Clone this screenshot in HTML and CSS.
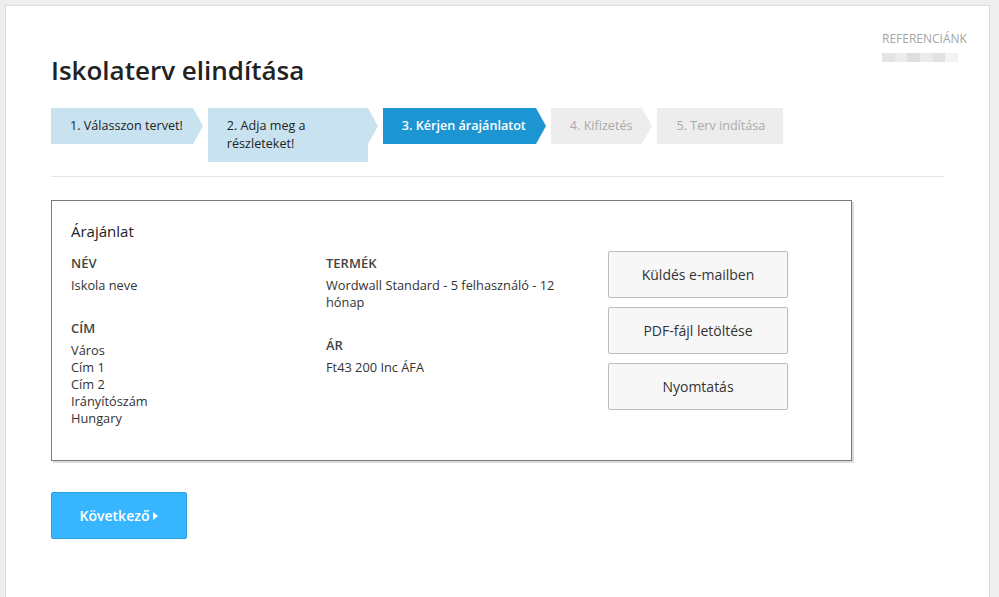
FILE: index.html
```html
<html>
	<head>
		<title>Iskolaterv elindítása</title>
		<link rel="stylesheet" href="styles.css">
	</head>
	<body>
		<div class="page">
			<div class="reference">
				<div class="reference_title">Referenciánk</div>
				<div class="reference_blur">
					<span></span><span></span><span></span><span></span><span></span><span></span>
				</div>
			</div>

			<h1 class="title">Iskolaterv elindítása</h1>

			<div class="steps">
				<div class="step step_done">1. Válasszon tervet!</div>
				<div class="step step_done step_wide">2. Adja meg a részleteket!</div>
				<div class="step step_active">3. Kérjen árajánlatot</div>
				<div class="step step_todo">4. Kifizetés</div>
				<div class="step step_todo step_last">5. Terv indítása</div>
			</div>

			<div class="divider"></div>

			<div class="quote">
				<div class="quote_main">
					<div class="quote_title">Árajánlat</div>
					<div class="quote_cols">
						<div class="quote_col quote_col_first">
							<div class="field">
								<div class="field_label">NÉV</div>
								<div class="field_value">Iskola neve</div>
							</div>
							<div class="field">
								<div class="field_label">CÍM</div>
								<div class="field_value">
									Város<br />
									Cím 1<br />
									Cím 2<br />
									Irányítószám<br />
									Hungary
								</div>
							</div>
						</div>
						<div class="quote_col">
							<div class="field">
								<div class="field_label">TERMÉK</div>
								<div class="field_value">Wordwall Standard - 5 felhasználó - 12 hónap</div>
							</div>
							<div class="field">
								<div class="field_label">ÁR</div>
								<div class="field_value">Ft43 200 Inc ÁFA</div>
							</div>
						</div>
					</div>
				</div>
				<div class="quote_actions">
					<button class="action">Küldés e-mailben</button>
					<button class="action">PDF-fájl letöltése</button>
					<button class="action">Nyomtatás</button>
				</div>
			</div>

			<button class="next">Következő<span class="next_caret"></span></button>
		</div>
	</body>
</html>
```

FILE: styles.css
```css
body	{
	margin: 0;
	padding: 5px 9px 0 5px;
	background: #eeeeee;
	font-family: "Open Sans", "Liberation Sans", sans-serif;
	color: #333;
	height: 597px;
	box-sizing: border-box;
	overflow: hidden;
}
.page	{
	position: relative;
	background: white;
	border: 1px solid #dcdcdc;
	border-bottom: none;
	height: 100%;
	box-sizing: border-box;
	padding: 46px 45px 0 45px;
}
.reference	{
	position: absolute;
	top: 25px;
	right: 17px;
	width: 90px;
}
.reference_title	{
	font-size: 12px;
	line-height: 16px;
	text-transform: uppercase;
	color: #a5a5a5;
}
.reference_blur	{
	display: flex;
	margin-top: 6px;
	width: 76px;
	height: 9px;
}
.reference_blur span	{
	flex: 1;
	background: #e4e4e4;
}
.reference_blur span:nth-child(2)	{
	background: #ececec;
}
.reference_blur span:nth-child(3)	{
	background: #dedede;
}
.reference_blur span:nth-child(4)	{
	background: #ebebeb;
}
.reference_blur span:nth-child(5)	{
	background: #e2e2e2;
}
.reference_blur span:nth-child(6)	{
	background: #f3f3f3;
}
.title	{
	margin: 0;
	font-size: 26px;
	line-height: 36px;
	font-weight: 600;
	color: #222;
}
.steps	{
	display: flex;
	align-items: flex-start;
	margin-top: 20px;
}
.step	{
	position: relative;
	font-size: 12.6px;
	line-height: 18px;
	padding: 9px 10px 9px 19px;
	margin-right: 15px;
	box-sizing: border-box;
}
.step::after	{
	content: "";
	position: absolute;
	left: 100%;
	top: 0;
	border-left: 10px solid transparent;
	border-top: 18px solid transparent;
	border-bottom: 18px solid transparent;
}
.step_done	{
	background: #c8e2f0;
	color: #222;
}
.step_done::after	{
	border-left-color: #c8e2f0;
}
.step_wide	{
	width: 160px;
}
.step_active	{
	background: #1e95d3;
	color: white;
	font-weight: 600;
}
.step_active::after	{
	border-left-color: #1e95d3;
}
.step_todo	{
	background: #ededed;
	color: #aaa;
}
.step_todo::after	{
	border-left-color: #ededed;
}
.step_last	{
	padding-right: 18px;
}
.step_last::after	{
	display: none;
}
.divider	{
	margin-top: 14px;
	border-top: 1px solid #e6e6e6;
}
.quote	{
	display: flex;
	align-items: center;
	width: 801px;
	margin-top: 23px;
	box-sizing: border-box;
	border: 1px solid #7a7a7a;
	box-shadow: 2px 2px 0 #dcdcdc;
	padding: 13px 19px;
}
.quote_main	{
	padding-top: 7px;
}
.quote_title	{
	font-size: 15px;
	line-height: 20px;
	color: #222;
	margin-bottom: 14px;
}
.quote_cols	{
	display: flex;
}
.quote_col	{
	width: 240px;
}
.quote_col_first	{
	width: 255px;
}
.field	{
	margin-bottom: 26px;
}
.quote_col_first .field:last-child	{
	margin-bottom: 20px;
}
.field_label	{
	font-size: 13px;
	line-height: 17px;
	font-weight: 600;
	color: #444;
	margin-bottom: 5px;
}
.field_value	{
	font-size: 12.8px;
	line-height: 17px;
	color: #333;
}
.quote_actions	{
	display: flex;
	flex-direction: column;
	gap: 9px;
	margin-left: 42px;
}
.action	{
	width: 180px;
	height: 47px;
	background: #f7f7f7;
	border: 1px solid #bdbdbd;
	border-radius: 2px;
	font-family: "Open Sans", "Liberation Sans", sans-serif;
	font-size: 14px;
	color: #333;
	padding: 0;
}
.next	{
	display: flex;
	align-items: center;
	justify-content: center;
	margin-top: 31px;
	width: 136px;
	height: 47px;
	background: #38b5ff;
	border: 1px solid #2a9fe0;
	border-radius: 2px;
	color: white;
	font-family: "Open Sans", "Liberation Sans", sans-serif;
	font-size: 14px;
	font-weight: 600;
	padding: 0;
}
.next_caret	{
	display: inline-block;
	margin-left: 4px;
	border-left: 5px solid white;
	border-top: 4px solid transparent;
	border-bottom: 4px solid transparent;
}
```
